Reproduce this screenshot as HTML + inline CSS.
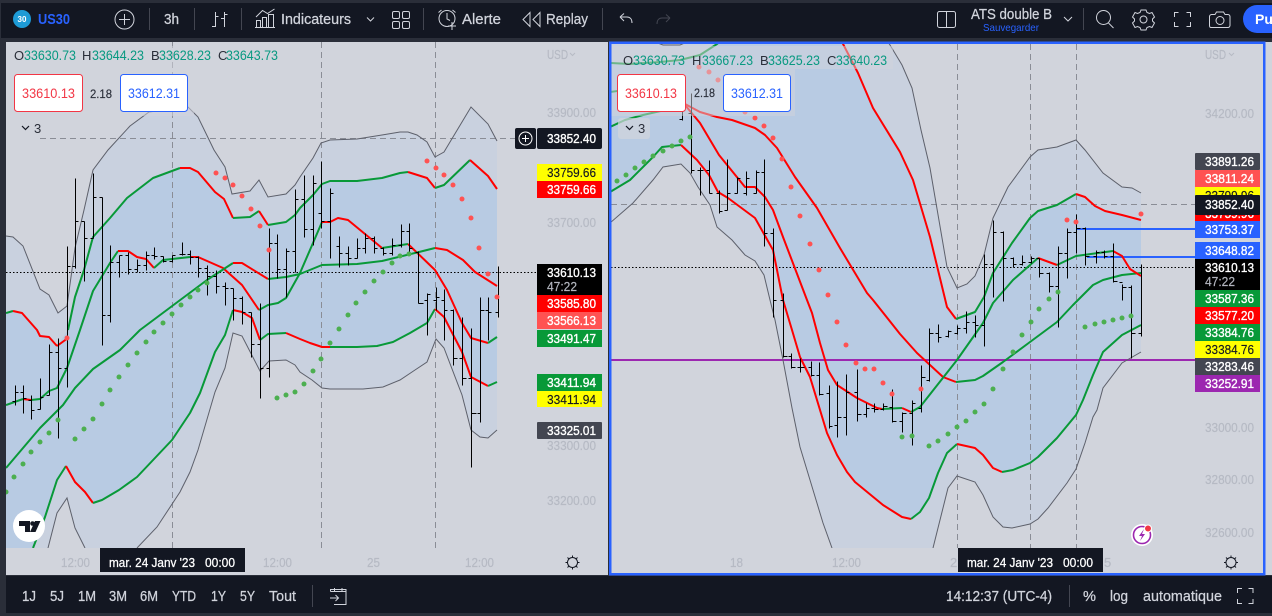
<!DOCTYPE html>
<html lang="fr"><head><meta charset="utf-8"><title>US30</title>
<style>
html,body{margin:0;padding:0;background:#2a2e39;width:1272px;height:616px;overflow:hidden}
svg{display:block;font-family:"Liberation Sans",sans-serif}
.tb{fill:#d1d4dc;font-size:14.5px;stroke:#d1d4dc;stroke-width:.25}
.ic{fill:none;stroke:#d1d4dc;stroke-width:1}
.ax{fill:#b6bac4;font-size:13px;stroke:#b6bac4;stroke-width:.2}
.lw{fill:#fff;font-size:13px;stroke:#fff;stroke-width:.35}
.lk{fill:#131722;font-size:13px;stroke:#131722;stroke-width:.15}
.lg{fill:#089981;font-size:13.5px}
.ll{fill:#2a2e39;font-size:13px}
.up{fill:none;stroke:#089938;stroke-width:2;stroke-linejoin:round}
.dn{fill:none;stroke:#ff0000;stroke-width:2;stroke-linejoin:round}
.gy{fill:none;stroke:#5d606b;stroke-width:1}
.bar{fill:none;stroke:#000;stroke-width:1;shape-rendering:crispEdges}
.dots circle{r:2.5px}
.tip{fill:#fff;font-size:12.5px;stroke:#fff;stroke-width:.25}
</style></head><body>
<svg width="1272" height="616" viewBox="0 0 1272 616" xmlns="http://www.w3.org/2000/svg">
<defs>
<clipPath id="cl"><rect x="6" y="42" width="531" height="506"/></clipPath>
<clipPath id="cr"><rect x="611" y="44" width="584" height="504"/></clipPath>
</defs>
<rect width="1272" height="616" fill="#2a2e39"/>
<rect x="1" y="3" width="1271" height="35" fill="#131722"/>
<rect x="6" y="576" width="1266" height="37" fill="#131722"/>
<rect x="6" y="42" width="602" height="533" fill="#d1d4dc"/>
<rect x="610" y="42" width="662" height="533" fill="#d1d4dc"/>

<!-- LEFT CHART -->
<g clip-path="url(#cl)">
<polygon fill="#c9d1df" points="6,236 13,237 23,246 40,289 49,295 58,313 67,306 75,248 84,210 93,170 108,150 130,126 149,112 188,107 198,117 214,150 225,167 232,194 250,191 259,180 268,197 286,194 295,185 300,177 313,158 321,143 330,140 357,139 382,135 400,132 408,132 417,135 427,142 435,157 444,152 453,137 471,107 488,124 497,141 497,430 488,438 480,437 471,430 462,395 444,348 436,339 427,362 415,370 400,380 383,387 363,389 330,389 322,388 312,380 300,372 295,365 286,360 269,361 260,371 242,336 233,333 225,368 215,392 198,450 190,472 180,492 157,527 137,548 85,548 75,528 67,498 57,513 48,548 6,548"/>
<polygon fill="#b8cbe3" points="6,313 13,311 22,313 37,330 40,336 49,337 57,346 68,330 75,297 84,270 93,237 110,218 127,198 153,178 180,168 190,168 198,172 215,192 224,199 233,218 250,217 259,211 268,225 286,222 295,215 300,208 313,195 322,184 330,181 357,181 382,178 400,173 408,172 427,178 435,188 444,185 470,160 488,176 497,189 497,382 488,386 471,377 462,352 444,317 435,309 427,323 410,333 393,342 377,346 357,347 322,347 310,343 300,339 286,333 268,334 260,340 252,318 242,312 233,310 225,335 215,352 200,393 190,413 172,440 137,477 119,490 102,500 93,503 85,492 75,482 66,466 57,480 45,517 33,548 6,548"/>
<g fill="none" stroke="#8a8d96" stroke-width="1" stroke-dasharray="6 4"><path d="M172.500 42V548M321.500 42V548M435.500 42V548M40 138.500H537"/></g>
<path d="M6 272.500H537" stroke="#000" stroke-width="1" stroke-dasharray="1.500 2" fill="none"/>

<polyline class="gy" points="6,236 13,237 23,246 40,289 49,295 58,313 67,306 75,248 84,210 93,170 108,150 130,126 149,112 188,107 198,117 214,150 225,167 232,194 250,191 259,180 268,197 286,194 295,185 300,177 313,158 321,143 330,140 357,139 382,135 400,132 408,132 417,135 427,142 435,157 444,152 453,137 471,107 488,124 497,141"/>
<polyline class="gy" points="48,548 57,513 67,498 75,528 85,548"/>
<polyline class="gy" points="137,548 157,527 180,492 190,472 198,450 215,392 225,368 233,333 242,336 260,371 269,361 286,360 295,365 300,372 312,380 322,388 330,389 363,389 383,387 400,380 415,370 427,362 436,339 444,348 462,395 471,430 480,437 488,438 497,430"/>
<!-- A up -->
<polyline class="up" points="6,313 13,311"/><polyline class="dn" points="13,311 22,313 37,330 40,336 49,337 57,346"/>
<polyline class="up" points="68,330 75,297 84,270 93,237 110,218 127,198 153,178 180,168"/><polyline class="dn" points="57,346 68,338"/>
<polyline class="dn" points="180,168 190,168 198,172 215,192 224,199 233,218"/><polyline class="up" points="233,218 250,217 259,211"/><polyline class="dn" points="259,211 268,225"/>
<polyline class="up" points="268,225 286,222 295,215 300,208 313,195 322,184 330,181 357,181 382,178 400,173 408,172"/><polyline class="dn" points="408,172 427,178 435,188"/><polyline class="up" points="435,188 444,185 470,160"/><polyline class="dn" points="470,160 488,176 497,189"/>
<!-- B inner -->
<polyline class="up" points="6,405 23,399"/><polyline class="dn" points="23,399 31,400"/><polyline class="up" points="31,400 40,399 49,391 57,388 67,368 80,330 93,291 110,263 118,251"/>
<polyline class="dn" points="118,251 128,251 137,257 146,259 154,268"/><polyline class="up" points="154,268 163,260 190,257"/>
<polyline class="dn" points="190,257 198,257 223,268 242,285 259,310"/><polyline class="up" points="259,310 268,305 278,303 286,298 300,273 313,243 322,222"/>
<polyline class="dn" points="322,222 330,222 338,218 348,220 382,248"/><polyline class="up" points="382,248 408,244"/><polyline class="dn" points="408,244 435,270 447,290 462,323 471,338 488,343"/><polyline class="up" points="488,343 497,337"/>
<!-- basis -->
<polyline class="up" points="6,468 40,428 63,405 75,388 93,369 120,350 140,330 207,280 233,263"/><polyline class="dn" points="233,263 242,263 268,279"/>
<polyline class="up" points="268,279 286,277 300,274 322,265 357,264 382,261 419,252 435,248"/><polyline class="dn" points="435,248 447,250 463,260 475,272 497,286"/>
<!-- A low -->
<polyline class="up" points="33,548 45,517 57,480 66,466"/><polyline class="dn" points="66,466 75,482 85,492 93,503"/>
<polyline class="up" points="93,503 102,500 119,490 137,477 172,440 190,413 200,393 215,352 225,335 233,310"/><polyline class="dn" points="233,310 242,312 252,318 260,340"/><polyline class="up" points="260,340 268,334 286,333"/><polyline class="dn" points="286,333 300,339 310,343 322,347 330,347"/>
<polyline class="up" points="330,347 357,347 377,346 393,342 410,333 427,323 435,309"/><polyline class="dn" points="435,309 444,317 462,352 471,377 488,386"/><polyline class="up" points="488,386 497,382"/>

<g class="bar" transform="translate(.5 .5)">
<path d="M15 385V405M12 401H15M15 392H18M23 385V413M20 392H23M23 398H26M31 395V419M28 400H31M31 410H34M40 378V409M37 409H40M40 397H43M49 344V395M46 395H49M49 352H52M58 338V438M55 352H58M58 368H61M67 246V387M64 368H67M67 266H70M75 178V268M72 266H75M75 221H78M84 221V281M81 221H84M84 238H87M93 173V238M90 238H93M93 197H96M102 197V345M99 197H102M102 315H105M110 245V322M107 315H110M110 262H113M119 255V277M116 262H119M119 255H122M128 252V274M125 255H128M128 269H131M137 259V272M134 269H137M137 265H140M146 251V270M143 265H146M146 255H149M154 247V259M151 255H154M154 256H157M163 256V262M160 256H163M163 261H166M172 255V262M169 261H172M172 255H175M182 242V255M179 254H182M182 254H185M190 250V264M187 254H190M190 257H193M198 256V277M195 257H198M198 268H201M207 265V295M204 268H207M207 276H210M216 270V293M213 276H216M216 286H219M225 282V305M222 286H225M225 288H228M233 288V320M230 288H233M233 298H236M242 296V324M239 298H242M242 312H245M251 312V357M248 312H251M251 344H254M260 303V398M257 344H260M260 368H263M269 228V377M266 368H269M269 243H272M277 234V278M274 243H277M277 269H280M286 248V297M283 269H286M286 251H289M295 189V272M292 251H295M295 199H298"/>
<path d="M304 175V237M301 199H304M304 229H307M313 175V245M310 229H313M313 183H316M321 161V228M318 213H321M321 221H324M330 188V258M327 221H330M330 193H333M339 236V267M336 246H339M339 253H342M348 246V265M345 253H348M348 258H351M357 238V258M354 258H357M357 248H360M365 233V253M362 248H365M365 238H368M374 236V253M371 238H374M374 248H377M383 247V255M380 248H383M383 253H386M392 238V255M389 253H392M392 245H395M401 224V247M398 245H401M401 231H404M409 223V252M406 231H409M409 248H412M418 251V303M415 252H418M418 303H423M427 293V335M424 300H427M427 294H430M436 287V310M433 300H436M436 297H439M444 289V340M441 300H444M444 310H447M453 309V365M450 310H453M453 358H457M462 317V385M459 358H462M462 378H466M471 328V467M468 378H471M471 413H476M480 297V422M477 413H480M480 310H484M488 297V340M485 310H488M488 312H491M498 266V317M495 312H498"/>
</g>
<g fill="#4caf50" class="dots">
<circle cx="6" cy="492" r="2.300"/><circle cx="14" cy="477" r="2.300"/><circle cx="23" cy="464" r="2.300"/><circle cx="31" cy="452" r="2.300"/><circle cx="40" cy="442" r="2.300"/><circle cx="49" cy="433" r="2.300"/><circle cx="58" cy="420" r="2.300"/><circle cx="75" cy="439" r="2.300"/><circle cx="84" cy="429" r="2.300"/><circle cx="93" cy="419" r="2.300"/><circle cx="102" cy="404" r="2.300"/><circle cx="110" cy="390" r="2.300"/><circle cx="119" cy="377" r="2.300"/><circle cx="128" cy="365" r="2.300"/><circle cx="137" cy="353" r="2.300"/><circle cx="146" cy="342" r="2.300"/><circle cx="154" cy="332" r="2.300"/><circle cx="163" cy="323" r="2.300"/><circle cx="172" cy="314" r="2.300"/><circle cx="181" cy="305" r="2.300"/><circle cx="190" cy="297" r="2.300"/><circle cx="198" cy="290" r="2.300"/><circle cx="207" cy="283" r="2.300"/><circle cx="277" cy="398" r="2.300"/><circle cx="286" cy="395" r="2.300"/><circle cx="295" cy="392" r="2.300"/><circle cx="304" cy="384" r="2.300"/><circle cx="313" cy="371" r="2.300"/><circle cx="321" cy="359" r="2.300"/><circle cx="330" cy="343" r="2.300"/><circle cx="339" cy="329" r="2.300"/><circle cx="348" cy="315" r="2.300"/><circle cx="356" cy="303" r="2.300"/><circle cx="365" cy="292" r="2.300"/><circle cx="374" cy="281" r="2.300"/><circle cx="383" cy="272" r="2.300"/><circle cx="392" cy="263" r="2.300"/><circle cx="400" cy="256" r="2.300"/><circle cx="409" cy="254" r="2.300"/>
</g>
<g fill="#ff5252" class="dots">
<circle cx="67" cy="338" r="2.300"/><circle cx="216" cy="173" r="2.300"/><circle cx="225" cy="178" r="2.300"/><circle cx="233" cy="185" r="2.300"/><circle cx="242" cy="196" r="2.300"/><circle cx="251" cy="209" r="2.300"/><circle cx="260" cy="226" r="2.300"/><circle cx="269" cy="250" r="2.300"/><circle cx="427" cy="161" r="2.300"/><circle cx="436" cy="168" r="2.300"/><circle cx="444" cy="175" r="2.300"/><circle cx="453" cy="185" r="2.300"/><circle cx="462" cy="199" r="2.300"/><circle cx="471" cy="218" r="2.300"/><circle cx="479" cy="248" r="2.300"/><circle cx="488" cy="274" r="2.300"/><circle cx="497" cy="297" r="2.300"/>
</g>
</g>
<rect x="6" y="46" width="282" height="23" fill="#d1d4dc" opacity=".55"/>
<rect x="6" y="69" width="188" height="47" fill="#d1d4dc" opacity=".55"/>

<text class="ll" x="14" y="60">O</text><text class="lg" x="24" y="60" textLength="52" lengthAdjust="spacingAndGlyphs">33630.73</text>
<text class="ll" x="82" y="60">H</text><text class="lg" x="92" y="60" textLength="52" lengthAdjust="spacingAndGlyphs">33644.23</text>
<text class="ll" x="151" y="60">B</text><text class="lg" x="159" y="60" textLength="52" lengthAdjust="spacingAndGlyphs">33628.23</text>
<text class="ll" x="218" y="60">C</text><text class="lg" x="226" y="60" textLength="52" lengthAdjust="spacingAndGlyphs">33643.73</text>
<rect x="14.500" y="74.500" width="68" height="37" rx="3" fill="#fff" stroke="#f23645"/>
<text x="22" y="98" font-size="13.500" fill="#f23645" textLength="53" lengthAdjust="spacingAndGlyphs">33610.13</text>
<text x="90" y="98" font-size="12" fill="#2a2e39" stroke="#2a2e39" stroke-width=".15" textLength="22" lengthAdjust="spacingAndGlyphs">2.18</text>
<rect x="120.500" y="74.500" width="67" height="37" rx="3" fill="#fff" stroke="#2962ff"/>
<text x="128" y="98" font-size="13.500" fill="#2962ff" textLength="52" lengthAdjust="spacingAndGlyphs">33612.31</text>
<path d="M22 126l3.500 3.500 3.500-3.500" fill="none" stroke="#131722" stroke-width="1.200"/><text x="34" y="133" font-size="13" fill="#2a2e39">3</text>

<text class="ax" x="547" y="59" textLength="21" lengthAdjust="spacingAndGlyphs">USD</text><path d="M570 53l2.500 2.500 2.500-2.500" fill="none" stroke="#b6bac4"/>
<text class="ax" x="547" y="117" textLength="49" lengthAdjust="spacingAndGlyphs">33900.00</text>
<text class="ax" x="547" y="227" textLength="49" lengthAdjust="spacingAndGlyphs">33700.00</text>
<text class="ax" x="547" y="450" textLength="49" lengthAdjust="spacingAndGlyphs">33300.00</text>
<text class="ax" x="547" y="505" textLength="49" lengthAdjust="spacingAndGlyphs">33200.00</text>

<rect x="515" y="128" width="21" height="21" rx="2" fill="#131722"/><circle cx="525.500" cy="138.500" r="6.500" fill="none" stroke="#fff"/><path d="M525.500 135v7M522 138.500h7" stroke="#fff"/>
<rect x="537" y="128" width="65" height="21" rx="2" fill="#131722"/><text class="lw" x="547" y="143" textLength="49" lengthAdjust="spacingAndGlyphs">33852.40</text>
<rect x="537" y="164" width="65" height="17" fill="#ffff00"/><text class="lk" x="547" y="177" textLength="49" lengthAdjust="spacingAndGlyphs">33759.66</text>
<rect x="537" y="181" width="65" height="17" fill="#ff0000"/><text class="lw" x="547" y="194" textLength="49" lengthAdjust="spacingAndGlyphs">33759.66</text>
<rect x="537" y="264" width="65" height="31" fill="#000"/><text class="lw" x="547" y="277" textLength="49" lengthAdjust="spacingAndGlyphs">33610.13</text><text x="547" y="291" font-size="13" fill="#b2b5be" stroke="#b2b5be" stroke-width=".2" textLength="30" lengthAdjust="spacingAndGlyphs">47:22</text>
<rect x="537" y="295" width="65" height="17" fill="#ff0000"/><text class="lw" x="547" y="308" textLength="49" lengthAdjust="spacingAndGlyphs">33585.80</text>
<rect x="537" y="312" width="65" height="17" fill="#ff5252"/><text class="lw" x="547" y="325" textLength="49" lengthAdjust="spacingAndGlyphs">33566.13</text>
<rect x="537" y="330" width="65" height="17" fill="#089938"/><text class="lw" x="547" y="343" textLength="49" lengthAdjust="spacingAndGlyphs">33491.47</text>
<rect x="537" y="374" width="65" height="17" fill="#089938"/><text class="lw" x="547" y="387" textLength="49" lengthAdjust="spacingAndGlyphs">33411.94</text>
<rect x="537" y="391" width="65" height="16" fill="#ffff00"/><text class="lk" x="547" y="404" textLength="49" lengthAdjust="spacingAndGlyphs">33411.94</text>
<rect x="537" y="422" width="65" height="17" rx="1" fill="#434651"/><text class="lw" x="547" y="435" textLength="49" lengthAdjust="spacingAndGlyphs">33325.01</text>

<circle cx="29" cy="526" r="16" fill="#fff"/>
<path d="M19 521h11v11h-5v-6h-6z" fill="#131722"/><circle cx="32.500" cy="523.500" r="2.300" fill="#131722"/><path d="M35 521h5.500l-5 11h-5.500z" fill="#131722"/>

<text class="ax" x="61" y="567" textLength="29" lengthAdjust="spacingAndGlyphs">12:00</text>
<text class="ax" x="263" y="567" textLength="29" lengthAdjust="spacingAndGlyphs">12:00</text>
<text class="ax" x="367" y="567" textLength="13" lengthAdjust="spacingAndGlyphs">25</text>
<text class="ax" x="465" y="567" textLength="29" lengthAdjust="spacingAndGlyphs">12:00</text>
<rect x="100" y="548" width="145" height="24" fill="#131722"/>
<text class="tip" x="109" y="567" textLength="86" lengthAdjust="spacingAndGlyphs">mar. 24 Janv '23</text><text class="tip" x="205" y="567" textLength="30" lengthAdjust="spacingAndGlyphs">00:00</text>
<g fill="none" stroke="#131722"><circle cx="572.500" cy="562.500" r="5"/><path d="M572.500 555.500v2M572.500 567.500v2M565.500 562.500h2M577.500 562.500h2M567.500 557.500l1.500 1.500M576 566l1.500 1.500M577.500 557.500l-1.500 1.500M569 566l-1.500 1.500"/></g>

<!-- RIGHT CHART -->
<g clip-path="url(#cr)">
<polygon fill="#c9d1df" points="610,42 655,42 663,45 680,45 687,42 888,42 890,45 902,65 912,88 921,130 930,168 947,267 957,288 967,284 975,276 984,255 993,218 1008,187 1030,157 1038,150 1057,147 1076,140 1085,150 1103,173 1122,187 1132,188 1141,193 1141,352 1122,363 1103,388 1097,410 1093,417 1085,443 1076,469 1067,483 1048,508 1038,519 1030,524 1012,528 1003,527 993,517 983,495 975,482 957,476 948,488 933,548 832,548 823,523 810,480 800,447 792,408 783,360 775,320 770,300 764,275 755,261 745,255 732,240 717,227 710,205 698,187 690,173 681,164 663,167 653,180 633,203 610,223"/>
<polygon fill="#b8cbe3" points="610,63 630,64 660,62 680,60 700,55 717,44 722,42 843,42 858,73 873,108 900,152 913,180 930,237 947,307 956,319 975,312 984,297 993,273 1012,243 1030,218 1038,211 1057,205 1076,194 1085,197 1095,206 1105,211 1122,215 1141,220 1141,325 1122,335 1103,352 1093,375 1083,400 1076,415 1057,438 1038,457 1030,463 1013,470 1002,472 993,468 983,455 975,448 957,444 947,453 938,473 929,498 920,512 911,519 902,517 883,505 855,482 847,472 837,455 827,433 810,377 800,357 792,330 783,300 773,250 755,218 728,198 718,192 709,175 697,160 681,145 662,147 653,157 630,180 610,192"/>
<g fill="none" stroke="#8a8d96" stroke-width="1" stroke-dasharray="6 4"><path d="M957.500 44V548M1030.500 44V548M1076.500 44V548M611 204.500H1195"/></g>
<path d="M611 267.500H1195" stroke="#000" stroke-dasharray="1.500 2" fill="none"/>
<path d="M611 360H1195" stroke="#9c27b0" stroke-width="2" fill="none"/>
<path d="M1077 229H1195M1087 257H1195" stroke="#2962ff" stroke-width="2" fill="none"/>

<polyline class="gy" points="655,42 663,45 680,45 687,42"/>
<polyline class="gy" points="888,42 890,45 902,65 912,88 921,130 930,168 947,267 957,288 967,284 975,276 984,255 993,218 1008,187 1030,157 1038,150 1057,147 1076,140 1085,150 1103,173 1122,187 1132,188 1141,193"/>
<polyline class="gy" points="610,223 633,203 653,180 663,167 681,164 690,173 698,187 710,205 717,227 732,240 745,255 755,261 764,275 770,300 775,320 783,360 792,408 800,447 810,480 823,523 832,548"/>
<polyline class="gy" points="933,548 948,488 957,476 975,482 983,495 993,517 1003,527 1012,528 1030,524 1038,519 1048,508 1067,483 1076,469 1085,443 1093,417 1097,410 1103,388 1122,363 1141,352"/>
<!-- L1 -->
<polyline class="up" points="610,63 630,64 660,62 680,60 700,55 717,44 722,40"/>
<polyline class="dn" points="841,40 858,73 873,108 900,152 913,180 930,237 947,307 956,319"/>
<polyline class="up" points="956,319 975,312 984,297 993,273 1012,243 1030,218 1038,211 1057,205 1076,194"/>
<polyline class="dn" points="1076,194 1085,197 1095,206 1105,211 1122,215 1141,220"/>
<!-- L2 -->
<polyline class="up" points="610,92 640,88 665,92 685,104"/>
<polyline class="dn" points="685,104 700,112 717,117 732,120 755,128 765,135 777,148 795,177 817,208 840,248 867,293 873,300 900,334 917,353 943,377 956,382"/>
<polyline class="up" points="956,382 975,380 983,376 1003,362 1030,342 1057,322 1073,305 1093,285 1103,280 1122,275 1141,273"/>
<!-- L3 -->
<polyline class="up" points="610,127 625,120 643,115 665,110 685,105"/>
<polyline class="dn" points="685,105 700,123 719,155 745,187 755,187 765,197 773,210 783,237 807,300 812,313 820,343 828,370 837,385 857,398 877,408 882,409"/>
<polyline class="up" points="882,409 902,408"/><polyline class="dn" points="902,408 911,412"/>
<polyline class="up" points="911,412 920,407 957,360 983,323 993,303 1013,280 1038,258"/><polyline class="dn" points="1038,258 1057,265"/><polyline class="up" points="1057,265 1076,256 1113,251"/><polyline class="dn" points="1113,251 1122,256 1130,269 1141,276"/>
<!-- L4 -->
<polyline class="up" points="610,192 630,180 653,157 662,147 681,145"/>
<polyline class="dn" points="681,145 697,160 709,175 718,192 728,198 755,218 773,250 783,300 792,330 800,357 810,377 827,433 837,455 847,472 855,482 883,505 902,517 911,519"/>
<polyline class="up" points="911,519 920,512 929,498 938,473 947,453 957,444"/>
<polyline class="dn" points="957,444 975,448 983,455 993,468 1002,472"/>
<polyline class="up" points="1002,472 1013,470 1030,463 1038,457 1057,438 1076,415 1083,400 1093,375 1103,352 1122,335 1141,325"/>

<g class="bar" transform="translate(.5 .5)">
<path d="M682 108V120M679 119H682M691 93V173M688 113H691M691 170H694M700 167V195M697 170H700M700 170H703M709 160V193M706 170H709M709 193H712M719 190V213M716 193H719M719 211H722M727 159V210M724 210H727M727 193H730M737 177V193M734 193H737M737 178H740M746 171V195M743 193H746M746 178H749M756 170V193M753 193H756M756 172H759M764 159V246M761 172H764M764 233H767M773 228V317M770 233H773M773 300H776M783 293V357M780 300H783M783 356H787M791 353V368M788 356H791M791 367H795M800 358V372M797 367H800M800 367H804M811 361V376M808 367H811M811 375H814M819 362V395M816 375H819M819 394H823M829 385V428M826 393H829M829 426H832M837 381V437M834 425H837M837 417H841M846 374V435M843 417H846M846 392H849M857 369V421M854 392H857M857 414H861M866 403V417M863 414H866M866 408H869M874 403V412M871 408H874M874 409H878M883 403V410M880 409H883M883 406H887M892 389V422M889 407H892M892 421H896M902 412V432M899 421H902M902 413H906"/>
<path d="M912 400V445M909 413H912M912 403H915M921 365V412M918 408H921M921 377H925M929 328V381M926 380H929M929 333H933M938 324V342M935 333H938M938 337H941M948 330V337M945 336H948M948 331H951M957 325V334M954 333H957M957 328H960M966 311V333M963 328H966M966 322H969M975 315V337M972 322H975M975 325H978M984 254V346M981 325H984M984 264H987M993 220V297M990 264H993M993 232H996M1003 231V301M1000 232H1003M1003 258H1006M1013 257V267M1010 258H1013M1013 264H1016M1022 255V265M1019 264H1022M1022 262H1025M1031 256V263M1028 262H1031M1031 258H1034M1039 258V277M1036 258H1039M1039 273H1043M1049 272V292M1046 273H1049M1049 286H1053M1058 246V327M1055 286H1058M1058 253H1062M1067 228V278M1064 253H1067M1067 232H1071M1076 214V253M1073 232H1076M1076 228H1080M1085 227V265M1082 228H1085M1085 256H1089M1096 250V263M1093 256H1096M1096 252H1099M1104 250V258M1101 252H1104M1104 256H1107M1113 243V282M1110 256H1113M1113 281H1117M1122 284V300M1119 282H1122M1122 287H1126M1131 285V358M1128 287H1131M1131 333H1135M1141 264V336M1138 333H1141"/>
</g>
<g fill="#4caf50" class="dots">
<circle cx="617" cy="181" r="2.300"/><circle cx="626" cy="175" r="2.300"/><circle cx="635" cy="168" r="2.300"/><circle cx="644" cy="162" r="2.300"/><circle cx="653" cy="156" r="2.300"/><circle cx="663" cy="151" r="2.300"/><circle cx="672" cy="146" r="2.300"/><circle cx="681" cy="141" r="2.300"/><circle cx="690" cy="137" r="2.300"/><circle cx="902" cy="437" r="2.300"/><circle cx="912" cy="436" r="2.300"/><circle cx="929" cy="446" r="2.300"/><circle cx="938" cy="441" r="2.300"/><circle cx="948" cy="434" r="2.300"/><circle cx="957" cy="427" r="2.300"/><circle cx="966" cy="421" r="2.300"/><circle cx="975" cy="412" r="2.300"/><circle cx="984" cy="404" r="2.300"/><circle cx="993" cy="389" r="2.300"/><circle cx="1003" cy="369" r="2.300"/><circle cx="1013" cy="352" r="2.300"/><circle cx="1022" cy="335" r="2.300"/><circle cx="1031" cy="322" r="2.300"/><circle cx="1039" cy="309" r="2.300"/><circle cx="1049" cy="299" r="2.300"/><circle cx="1058" cy="292" r="2.300"/><circle cx="1085" cy="327" r="2.300"/><circle cx="1095" cy="324" r="2.300"/><circle cx="1104" cy="322" r="2.300"/><circle cx="1113" cy="320" r="2.300"/><circle cx="1122" cy="318" r="2.300"/><circle cx="1131" cy="316" r="2.300"/>
</g>
<g fill="#ff5252" class="dots">
<circle cx="699" cy="67" r="2.300"/><circle cx="709" cy="72" r="2.300"/><circle cx="718" cy="80" r="2.300"/><circle cx="745" cy="112" r="2.300"/><circle cx="755" cy="118" r="2.300"/><circle cx="764" cy="126" r="2.300"/><circle cx="773" cy="138" r="2.300"/><circle cx="782" cy="159" r="2.300"/><circle cx="791" cy="187" r="2.300"/><circle cx="800" cy="216" r="2.300"/><circle cx="810" cy="244" r="2.300"/><circle cx="819" cy="270" r="2.300"/><circle cx="828" cy="295" r="2.300"/><circle cx="837" cy="322" r="2.300"/><circle cx="846" cy="345" r="2.300"/><circle cx="856" cy="363" r="2.300"/><circle cx="865" cy="369" r="2.300"/><circle cx="874" cy="369" r="2.300"/><circle cx="883" cy="383" r="2.300"/><circle cx="892" cy="394" r="2.300"/><circle cx="921" cy="389" r="2.300"/><circle cx="1067" cy="220" r="2.300"/><circle cx="1076" cy="222" r="2.300"/><circle cx="1141" cy="214" r="2.300"/>
</g>
</g>
<rect x="611" y="46" width="282" height="23" fill="#d1d4dc" opacity=".5"/>
<rect x="611" y="69" width="184" height="47" fill="#d1d4dc" opacity=".5"/>
<rect x="618" y="118" width="32" height="21" rx="3" fill="#d1d4dc" opacity=".7"/>

<text class="ll" x="623" y="65">O</text><text class="lg" x="633" y="65" textLength="52" lengthAdjust="spacingAndGlyphs">33630.73</text>
<text class="ll" x="692" y="65">H</text><text class="lg" x="702" y="65" textLength="51" lengthAdjust="spacingAndGlyphs">33667.23</text>
<text class="ll" x="760" y="65">B</text><text class="lg" x="768" y="65" textLength="52" lengthAdjust="spacingAndGlyphs">33625.23</text>
<text class="ll" x="827" y="65">C</text><text class="lg" x="836" y="65" textLength="51" lengthAdjust="spacingAndGlyphs">33640.23</text>
<rect x="617.500" y="74.500" width="68" height="37" rx="3" fill="#fff" stroke="#f23645"/>
<text x="625" y="98" font-size="13.500" fill="#f23645" textLength="52" lengthAdjust="spacingAndGlyphs">33610.13</text>
<text x="694" y="97" font-size="12" fill="#2a2e39" stroke="#2a2e39" stroke-width=".15" textLength="21" lengthAdjust="spacingAndGlyphs">2.18</text>
<rect x="723.500" y="74.500" width="67" height="37" rx="3" fill="#fff" stroke="#2962ff"/>
<text x="731" y="98" font-size="13.500" fill="#2962ff" textLength="52" lengthAdjust="spacingAndGlyphs">33612.31</text>
<path d="M626 126l3.500 3.500 3.500-3.500" fill="none" stroke="#131722" stroke-width="1.200"/><text x="638" y="133" font-size="13" fill="#2a2e39">3</text>

<text class="ax" x="1205" y="59" textLength="21" lengthAdjust="spacingAndGlyphs">USD</text><path d="M1229 53l2.500 2.500 2.500-2.500" fill="none" stroke="#b6bac4"/>
<text class="ax" x="1205" y="118" textLength="49" lengthAdjust="spacingAndGlyphs">34200.00</text>
<text class="ax" x="1205" y="432" textLength="49" lengthAdjust="spacingAndGlyphs">33000.00</text>
<text class="ax" x="1205" y="484" textLength="49" lengthAdjust="spacingAndGlyphs">32800.00</text>
<text class="ax" x="1205" y="537" textLength="49" lengthAdjust="spacingAndGlyphs">32600.00</text>

<rect x="1195" y="153" width="65" height="17" rx="1" fill="#434651"/><text class="lw" x="1205" y="166" textLength="49" lengthAdjust="spacingAndGlyphs">33891.26</text>
<rect x="1195" y="170" width="65" height="17" fill="#ff5252"/><text class="lw" x="1205" y="183" textLength="49" lengthAdjust="spacingAndGlyphs">33811.24</text>
<rect x="1195" y="187" width="65" height="9" fill="#ffff00"/><text class="lk" x="1205" y="200" textLength="49" lengthAdjust="spacingAndGlyphs">33799.96</text>
<rect x="1195" y="204" width="65" height="17" fill="#ff0000"/><text class="lw" x="1205" y="218" textLength="49" lengthAdjust="spacingAndGlyphs">33759.96</text>
<rect x="1195" y="195" width="65" height="20" rx="1" fill="#131722"/><text class="lw" x="1205" y="209" textLength="49" lengthAdjust="spacingAndGlyphs">33852.40</text>
<rect x="1195" y="221" width="65" height="17" fill="#2962ff"/><text class="lw" x="1205" y="234" textLength="49" lengthAdjust="spacingAndGlyphs">33753.37</text>
<rect x="1195" y="242" width="65" height="17" fill="#2962ff"/><text class="lw" x="1205" y="255" textLength="49" lengthAdjust="spacingAndGlyphs">33648.82</text>
<rect x="1195" y="259" width="65" height="31" fill="#000"/><text class="lw" x="1205" y="272" textLength="49" lengthAdjust="spacingAndGlyphs">33610.13</text><text x="1205" y="286" font-size="13" fill="#b2b5be" stroke="#b2b5be" stroke-width=".2" textLength="30" lengthAdjust="spacingAndGlyphs">47:22</text>
<rect x="1195" y="290" width="65" height="17" fill="#089938"/><text class="lw" x="1205" y="303" textLength="49" lengthAdjust="spacingAndGlyphs">33587.36</text>
<rect x="1195" y="307" width="65" height="17" fill="#ff0000"/><text class="lw" x="1205" y="320" textLength="49" lengthAdjust="spacingAndGlyphs">33577.20</text>
<rect x="1195" y="324" width="65" height="17" fill="#089938"/><text class="lw" x="1205" y="337" textLength="49" lengthAdjust="spacingAndGlyphs">33384.76</text>
<rect x="1195" y="341" width="65" height="17" fill="#ffff00"/><text class="lk" x="1205" y="354" textLength="49" lengthAdjust="spacingAndGlyphs">33384.76</text>
<rect x="1195" y="358" width="65" height="17" fill="#434651"/><text class="lw" x="1205" y="371" textLength="49" lengthAdjust="spacingAndGlyphs">33283.46</text>
<rect x="1195" y="375" width="65" height="17" fill="#9c27b0"/><text class="lw" x="1205" y="388" textLength="49" lengthAdjust="spacingAndGlyphs">33252.91</text>

<circle cx="1142" cy="535" r="11" fill="#fff"/><circle cx="1142" cy="535" r="8.500" fill="none" stroke="#9c27b0" stroke-width="1.600"/><path d="M1144 529l-5 7h3l-2 5 5-7h-3z" fill="#9c27b0"/><circle cx="1148" cy="528.500" r="3.500" fill="#f23645" stroke="#fff"/>

<text class="ax" x="730" y="567" textLength="13" lengthAdjust="spacingAndGlyphs">18</text>
<text class="ax" x="832" y="567" textLength="29" lengthAdjust="spacingAndGlyphs">12:00</text>
<text class="ax" x="950" y="567">2</text>
<text class="ax" x="1104" y="567">5</text>
<rect x="958" y="548" width="145" height="24" fill="#131722"/>
<text class="tip" x="967" y="567" textLength="86" lengthAdjust="spacingAndGlyphs">mar. 24 Janv '23</text><text class="tip" x="1063" y="567" textLength="30" lengthAdjust="spacingAndGlyphs">00:00</text>
<g fill="none" stroke="#131722"><circle cx="1231" cy="562.500" r="5"/><path d="M1231 555.500v2M1231 567.500v2M1224 562.500h2M1236 562.500h2M1226 557.500l1.500 1.500M1234.500 566l1.500 1.500M1236 557.500l-1.500 1.500M1227.500 566l-1.500 1.500"/></g>

<rect x="610.250" y="42.750" width="654" height="531.500" fill="none" stroke="#2962ff" stroke-width="2.500"/>

<!-- TOP TOOLBAR -->
<circle cx="22" cy="19" r="9" fill="#1e9bd6"/><text x="22" y="22" font-size="8" font-weight="bold" fill="#fff" text-anchor="middle">30</text>
<text x="38" y="24" font-size="14.500" font-weight="bold" fill="#2962ff" textLength="32" lengthAdjust="spacingAndGlyphs">US30</text>
<g class="ic">
<circle cx="124.500" cy="19.500" r="9.500"/><path d="M124.500 14v11M119 19.500h11"/>
<path d="M149.500 8v22M194.500 8v22M241.500 8v22M423.500 8v22M602.500 8v22M1083.500 8v22" stroke="#434651"/>
<path d="M215.500 12v15M212 26.500h3.500M215.500 16.500h3M224.500 12v15M221 18.500h3.500M224.500 14.500h3"/>
<path d="M256.500 27.500v-7h4v7zM262.500 27.500v-10h4v10zM268.500 27.500v-13h5v13zM255 27.500h20M256 17l6.500-6.500 5 3 7-4.500"/>
<path d="M367 17.500l3.500 3.500 3.500-3.500"/>
<rect x="392.500" y="11.500" width="7" height="7" rx="1.500"/><rect x="402.500" y="11.500" width="7" height="7" rx="1.500"/><rect x="392.500" y="21.500" width="7" height="7" rx="1.500"/><rect x="402.500" y="21.500" width="7" height="7" rx="1.500"/>
<circle cx="447" cy="18.500" r="8"/><path d="M447 13v6l3 1.500M438.500 12.500l3-2.500M452.500 10l3 2.500M452 22v8M448 26h8"/>
<path d="M530 12.500l-7 7 7 7zM540 12.500l-7 7 7 7z"/>
<path d="M620 17l4-3.500M620 17l4 4M620 17h7c3 0 5 2 5 6"/>
<path d="M670 18l-4-3.500M670 18l-4 4M670 18h-8c-3 0-5 2-5 6" stroke="#434651"/>
<rect x="937.500" y="11.500" width="18" height="16" rx="2"/><path d="M946.500 11.500v16"/>
<path d="M1064 17l4 4 4-4"/>
<circle cx="1103.500" cy="17.500" r="7"/><path d="M1108.500 23l5 5"/>
<path d="M1141 11h5l1 2.500 2.500 1 2.500-1 2.500 4.500-2 2v2l2 2-2.500 4.500-2.500-1-2.500 1-1 2.500h-5l-1-2.500-2.500-1-2.500 1-2.500-4.500 2-2v-2l-2-2 2.500-4.500 2.500 1 2.500-1z" transform="translate(0 -1)"/><circle cx="1143.500" cy="19.500" r="3.500"/>
<path d="M1174.500 17v-4.500h4M1186.500 12.500h4v4.500M1190.500 22v4.500h-4M1178.500 26.500h-4V22"/>
<path d="M1209.500 16.500c0-1 1-2 2-2h3.500l1.500-2.500h7l1.500 2.500h3c1 0 2 1 2 2v9c0 1-1 2-2 2h-17c-1 0-1.500-1-1.500-2z"/><circle cx="1220" cy="20.500" r="4"/>
</g>
<text class="tb" x="164" y="24" textLength="15" lengthAdjust="spacingAndGlyphs">3h</text>
<text class="tb" x="281" y="24" textLength="70" lengthAdjust="spacingAndGlyphs">Indicateurs</text>
<text class="tb" x="462" y="24" textLength="39" lengthAdjust="spacingAndGlyphs">Alerte</text>
<text class="tb" x="546" y="24" textLength="42" lengthAdjust="spacingAndGlyphs">Replay</text>
<text class="tb" x="971" y="19" textLength="81" lengthAdjust="spacingAndGlyphs">ATS double B</text>
<text x="983" y="31" font-size="10.500" fill="#2962ff" textLength="56" lengthAdjust="spacingAndGlyphs">Sauvegarder</text>
<path d="M1272 5h-15a14 14 0 0 0 0 28h15z" fill="#2962ff"/><text x="1255" y="24" font-size="14" font-weight="bold" fill="#fff">Pu</text>

<!-- BOTTOM TOOLBAR -->
<text class="tb" x="22" y="601" textLength="14" lengthAdjust="spacingAndGlyphs">1J</text>
<text class="tb" x="50" y="601" textLength="14" lengthAdjust="spacingAndGlyphs">5J</text>
<text class="tb" x="78" y="601" textLength="18" lengthAdjust="spacingAndGlyphs">1M</text>
<text class="tb" x="109" y="601" textLength="18" lengthAdjust="spacingAndGlyphs">3M</text>
<text class="tb" x="140" y="601" textLength="18" lengthAdjust="spacingAndGlyphs">6M</text>
<text class="tb" x="172" y="601" textLength="24" lengthAdjust="spacingAndGlyphs">YTD</text>
<text class="tb" x="211" y="601" textLength="15" lengthAdjust="spacingAndGlyphs">1Y</text>
<text class="tb" x="240" y="601" textLength="15" lengthAdjust="spacingAndGlyphs">5Y</text>
<text class="tb" x="269" y="601" textLength="27" lengthAdjust="spacingAndGlyphs">Tout</text>
<path d="M312.500 585v22M1069.500 585v22" stroke="#434651" fill="none"/>
<g class="ic"><path d="M330.500 591.500h15.500v13h-12M330.500 591.500v-2h15.500v2M334.500 588v3M342 588v3M330 598h8.500M335.500 595l3 3-3 3"/><path d="M1237.500 593v-4.500h4.500M1248.500 588.500h4.500v4.500M1253 599v4.500h-4.500M1242 603.500h-4.500V599"/></g>
<text class="tb" x="946" y="601" textLength="106" lengthAdjust="spacingAndGlyphs">14:12:37 (UTC-4)</text>
<text class="tb" x="1083" y="601" textLength="13" lengthAdjust="spacingAndGlyphs">%</text>
<text class="tb" x="1110" y="601" textLength="18" lengthAdjust="spacingAndGlyphs">log</text>
<text class="tb" x="1143" y="601" textLength="79" lengthAdjust="spacingAndGlyphs">automatique</text>
</svg>
</body></html>
